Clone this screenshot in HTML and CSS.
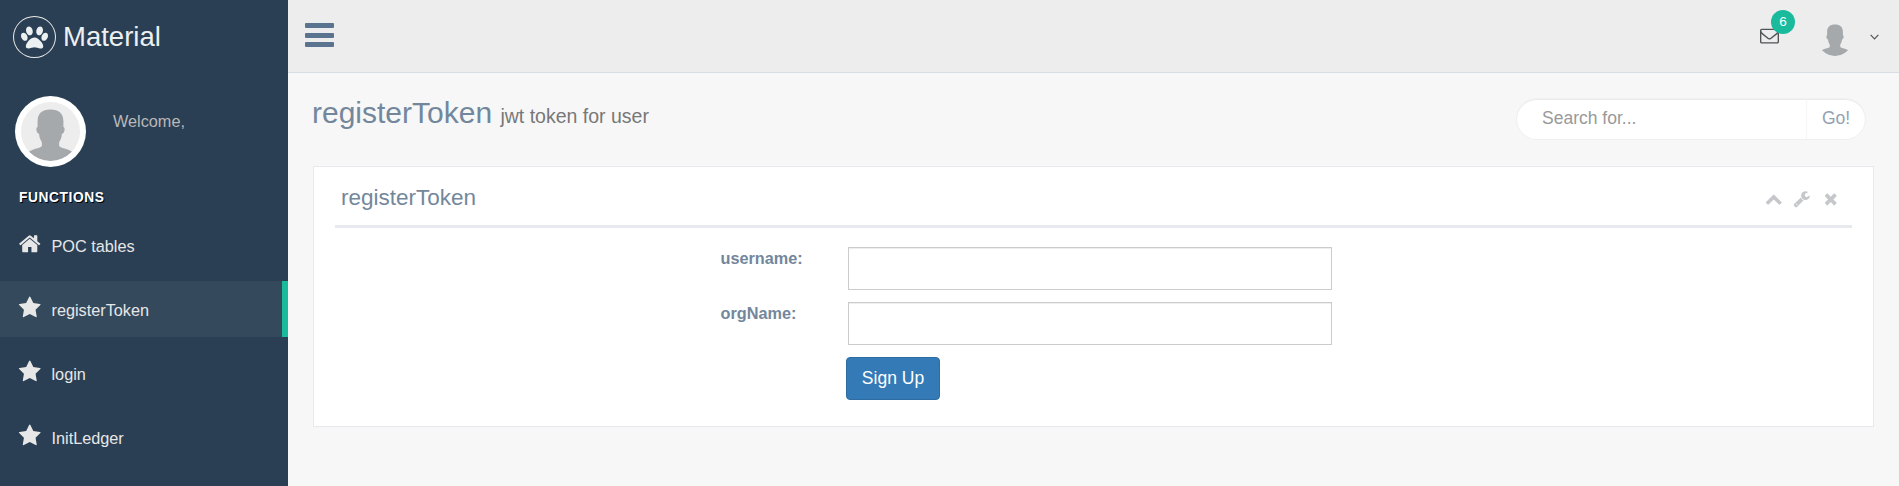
FILE: index.html
```html
<!DOCTYPE html>
<html lang="en">
<head>
<meta charset="utf-8">
<title>Material</title>
<link rel="stylesheet" href="styles.css">
</head>
<body>
<svg class="defs" width="0" height="0">
  <symbol id="star" viewBox="0 0 1792 1792"><path d="M1728 647q0 22-26 48l-363 354 86 500q1 7 1 20 0 21-10.5 35.5t-30.5 14.5q-19 0-40-12l-449-236-449 236q-22 12-40 12-21 0-31.5-14.5t-10.5-35.5q0-6 2-20l86-500-364-354q-25-27-25-48 0-37 56-46l502-73 225-455q19-41 49-41t49 41l225 455 502 73q56 9 56 46z"/></symbol>
  <symbol id="home" viewBox="0 0 1792 1792"><path d="M1472 992v480q0 26-19 45t-45 19h-384v-384h-256v384h-384q-26 0-45-19t-19-45v-480q0-1 .5-3t.5-3l575-474 575 474q1 2 1 6zm223-69l-62 74q-8 9-21 11h-3q-13 0-21-7l-692-577-692 577q-12 8-24 7-13-2-21-11l-62-74q-8-10-7-23.5t11-21.5l719-599q32-26 76-26t76 26l244 204v-195q0-14 9-23t23-9h192q14 0 23 9t9 23v408l219 182q10 8 11 21.5t-7 23.5z"/></symbol>
  <symbol id="paw" viewBox="0 0 1792 1792"><path d="M780 508q0 60-19 113.5t-63 92.5-105 39q-76 0-138-57.5t-92-135.5-30-151q0-60 19-113.5t63-92.5 105-39q77 0 138.500 57.500t91.500 135 30 151.500zm-342 411q0 80-42 139t-119 59q-76 0-141.500-55.500t-100.500-133.500-35-152q0-80 42-139.500t119-59.500q76 0 141.500 55.500t100.500 134 35 152.500zm458-27q118 0 255 97.500t229 237 92 254.500q0 46-17 76.500t-48.500 45-64.500 20-76 5.500q-68 0-187.500-45t-182.500-45q-66 0-192.500 44.500t-200.500 44.500q-183 0-183-146 0-86 56-191.500t139.500-192.500 187.500-146 193-59zM1199 753q-61 0-105-39t-63-92.500-19-113.500q0-74 30-151.500t91.500-135 138.500-57.500q61 0 105 39t63 92.500 19 113.500q0 73-30 151t-92 135.500-138 57.500zM1631 577q77 0 119 59.500t42 139.500q0 74-35 152t-100.500 133.500-141.500 55.500q-77 0-119-59t-42-139q0-74 35-152.500t100.500-134 141.500-55.500z"/></symbol>
  <symbol id="person" viewBox="0 0 58 58"><path d="M29 7.300C20.500 7.300 16.300 11.500 16.300 19V24.500C14.200 25 15 31 17.800 31.500C18 35.500 19.300 37.500 20.500 39.500V43C20.300 45.300 13.500 45 7.800 48.800A29 29 0 0 0 50.200 48.800C44.500 45 37.700 45.300 37.500 43V39.500C38.700 37.500 40 35.500 40.200 31.500C43 31 43.800 25 41.700 24.500V19C41.700 11.500 37.500 7.300 29 7.300z"/></symbol>
</svg>

<div class="layout">
  <aside class="sidebar">
    <a class="brand">
      <span class="brand-ring"><svg class="brand-paw"><use href="#paw"/></svg></span>
      <span>Material</span>
    </a>
    <div class="profile">
      <span class="profile-photo"><svg><use href="#person"/></svg></span>
      <span class="profile-greeting">Welcome,</span>
    </div>
    <h3 class="menu-heading">FUNCTIONS</h3>
    <nav class="menu">
      <a class="menu-item"><svg class="menu-icon"><use href="#home"/></svg><span>POC tables</span></a>
      <a class="menu-item active"><svg class="menu-icon"><use href="#star"/></svg><span>registerToken</span></a>
      <a class="menu-item"><svg class="menu-icon"><use href="#star"/></svg><span>login</span></a>
      <a class="menu-item"><svg class="menu-icon"><use href="#star"/></svg><span>InitLedger</span></a>
    </nav>
  </aside>

  <div class="page">
    <header class="topbar">
      <a class="toggle"><i></i><i></i><i></i></a>
      <div class="topbar-right">
        <span class="mail">
          <svg class="mail-icon" viewBox="0 200 1792 1500"><path d="M1664 1504v-768q-32 36-69 66-268 206-426 338-51 43-83 67t-86.500 48.500-102.500 24.500h-2q-48 0-102.500-24.500t-86.500-48.500-83-67q-158-132-426-338-37-30-69-66v768q0 13 9.500 22.500t22.500 9.500h1472q13 0 22.500-9.500t9.500-22.500zm0-1051v-24.500l-.5-13-3-12.500-5.500-9-9-7.500-14-2.500h-1472q-13 0-22.500 9.500t-9.500 22.500q0 168 147 284 193 152 401 317 6 5 35 29.500t46 37.500 44.500 31.500 50.500 27.500 43 9h2q20 0 43-9t50.500-27.500 44.500-31.500 46-37.500 35-29.500q208-165 401-317 54-43 100.500-115.500t46.500-131.500zm128-37v1088q0 66-47 113t-113 47h-1472q-66 0-113-47t-47-113v-1088q0-66 47-113t113-47h1472q66 0 113 47t47 113z"/></svg>
          <span class="badge">6</span>
        </span>
        <svg class="user-photo"><use href="#person"/></svg>
        <svg class="caret" viewBox="0 0 10 6"><path d="M.7.7 5 5 9.300.7"/></svg>
      </div>
    </header>

    <main class="content">
      <div class="page-title">
        <h1>registerToken <small>jwt token for user</small></h1>
        <div class="search">
          <span class="search-field">Search for...</span>
          <span class="search-go">Go!</span>
        </div>
      </div>

      <section class="panel">
        <div class="panel-head">
          <h2>registerToken</h2>
          <div class="tools">
            <svg viewBox="0 0 1792 1792"><path d="M1683 1331l-166 165q-19 19-45 19t-45-19l-531-531-531 531q-19 19-45 19t-45-19l-166-165q-19-19-19-45.500t19-45.500l742-741q19-19 45-19t45 19l742 741q19 19 19 45.500t-19 45.500z"/></svg>
            <svg viewBox="0 0 1792 1792"><path d="M448 1472q0-26-19-45t-45-19-45 19-19 45 19 45 45 19 45-19 19-45zm644-420l-682 682q-37 37-90 37-52 0-91-37l-106-108q-38-36-38-90 0-53 38-91l681-681q39 98 114.500 173.500t173.500 114.500zm634-435q0 39-23 106-47 134-164.500 217.500t-258.500 83.500q-185 0-316.500-131.500t-131.500-316.500 131.500-316.500 316.500-131.500q58 0 121.500 16.500t107.500 46.500q16 11 16 28t-16 28l-293 169v224l193 107q5-3 79-48.500t135.500-81 70.500-35.500q15 0 23.500 10t8.500 25z"/></svg>
            <svg viewBox="0 0 1792 1792"><path d="M1490 1322q0 40-28 68l-136 136q-28 28-68 28t-68-28l-294-294-294 294q-28 28-68 28t-68-28l-136-136q-28-28-28-68t28-68l294-294-294-294q-28-28-28-68t28-68l136-136q28-28 68-28t68 28l294 294 294-294q28-28 68-28t68 28l136 136q28 28 28 68t-28 68l-294 294 294 294q28 28 28 68z"/></svg>
          </div>
        </div>
        <form class="form">
          <label for="username">username:</label><input id="username" type="text">
          <label for="org">orgName:</label><input id="org" type="text">
          <button type="button">Sign Up</button>
        </form>
      </section>
    </main>
  </div>
</div>
</body>
</html>
```

FILE: styles.css
```css
* { box-sizing: border-box; }
body {
  margin: 0;
  font-family: "Liberation Sans", Arial, sans-serif;
  font-size: 16.25px;
  color: #73879c;
  background: #f7f7f7;
}
h1, h2, h3 { margin: 0; font-weight: 400; }
.defs { position: absolute; }
svg { display: block; fill: currentColor; }
.layout { display: flex; height: 486px; overflow: hidden; }

/* Sidebar */
.sidebar { width: 288px; flex: none; background: #2a3f54; color: #e7e7e7; }
.brand {
  display: flex;
  align-items: center;
  gap: 7px;
  height: 73px;
  padding: 1px 0 0 13px;
  font-size: 27.5px;
  color: #ecf0f1;
}
.brand-ring {
  display: flex;
  align-items: center;
  justify-content: center;
  width: 43px;
  height: 42px;
  border: 1px solid #eaeaea;
  border-radius: 50%;
}
.brand-paw { width: 27px; height: 27px; }
.profile { display: flex; height: 94px; padding: 23px 0 0 15px; gap: 27px; }
.profile-photo {
  width: 71px;
  height: 71px;
  padding: 6px;
  border-radius: 50%;
  background: #fff;
}
.profile-photo svg { width: 59px; height: 59px; border-radius: 50%; background: #ededed; color: #a5a9ac; }
.profile-greeting { padding-top: 16px; line-height: 19px; color: #bab8b8; }
.menu-heading {
  height: 50px;
  padding: 22px 0 0 19px;
  font-size: 13.75px;
  line-height: 18px;
  font-weight: 700;
  letter-spacing: .6px;
  color: #fff;
  text-shadow: 1px 1px #000;
}
.menu { display: flex; flex-direction: column; gap: 8px; }
.menu-item { display: flex; height: 56px; padding: 15px 0 0 18px; gap: 10px; line-height: 28px; }
.menu-item.active { background: #35495d; border-right: 6px solid #1abb9c; }
.menu-icon { width: 23.500px; height: 23.500px; }

/* Top bar */
.page { flex: 1; min-width: 0; }
.topbar {
  display: flex;
  justify-content: space-between;
  height: 73px;
  padding: 23px 20px 0 17px;
  background: #ededed;
  border-bottom: 1px solid #d9dee4;
}
.toggle { display: flex; flex-direction: column; gap: 4.500px; width: 29px; }
.toggle i { height: 5px; border-radius: 1px; background: #5a738e; }
.topbar-right { display: flex; color: #515356; }
.mail { position: relative; width: 19px; margin: 5px 38px 0 0; }
.mail-icon { width: 19px; height: 16px; }
.badge {
  position: absolute;
  left: 11px;
  top: -18px;
  width: 24px;
  height: 24px;
  border-radius: 50%;
  background: #1abb9c;
  color: #fff;
  font-size: 13.500px;
  line-height: 24px;
  text-align: center;
}
.user-photo { width: 36px; height: 36px; margin: -3px 17px 0 0; border-radius: 50%; color: #a5a9ac; }
.caret { width: 9px; height: 6px; margin-top: 11px; fill: none; stroke: #515356; stroke-width: 1.300; }

/* Content */
.content { padding: 0 25px; }
.page-title { display: flex; justify-content: space-between; height: 93px; padding: 23px 8px 0 0; }
h1 { margin-left: -1px; font-size: 30px; line-height: 34px; }
h1 small { font-size: 19.500px; color: #777; }
.search {
  display: flex;
  width: 350px;
  height: 42px;
  margin-top: 2px;
  border: 1px solid rgba(221, 226, 232, .49);
  border-radius: 32px;
  background: #fff;
  box-shadow: inset 0 1px 0 rgba(0, 0, 0, .075);
  font-size: 17.500px;
  line-height: 39px;
}
.search-field { flex: 1; padding-left: 25px; color: #999; }
.search-go { width: 59px; padding-left: 15px; border-left: 1px solid #f5f5f5; color: #93a2b2; }

.panel { height: 261px; padding: 0 21px; background: #fff; border: 1px solid #e6e9ed; }
.panel-head {
  display: flex;
  justify-content: space-between;
  height: 61px;
  padding: 18px 13px 0 6px;
  border-bottom: 3px solid #e6e9ed;
}
h2 { font-size: 22.500px; line-height: 26px; }
.tools { display: flex; gap: 11px; padding-top: 5px; color: #c5c7cb; }
.tools svg { width: 17.500px; height: 17.500px; }
.form {
  display: grid;
  grid-template-columns: 127px 484px;
  grid-auto-rows: 43px;
  row-gap: 12px;
  padding: 19px 0 0 386px;
}
label { margin-left: -.500px; line-height: 22px; font-weight: 700; }
input {
  width: 484px;
  height: 43px;
  border: 1px solid #ccc;
  background: #fff;
  box-shadow: inset 0 1px 1px rgba(0, 0, 0, .075);
}
button {
  grid-column: 2;
  width: 94px;
  height: 43px;
  margin-left: -2px;
  padding: 0;
  border: 1px solid #2e6da4;
  border-radius: 4px;
  background: #337ab7;
  color: #fff;
  font: 17.500px "Liberation Sans", Arial, sans-serif;
}
```
